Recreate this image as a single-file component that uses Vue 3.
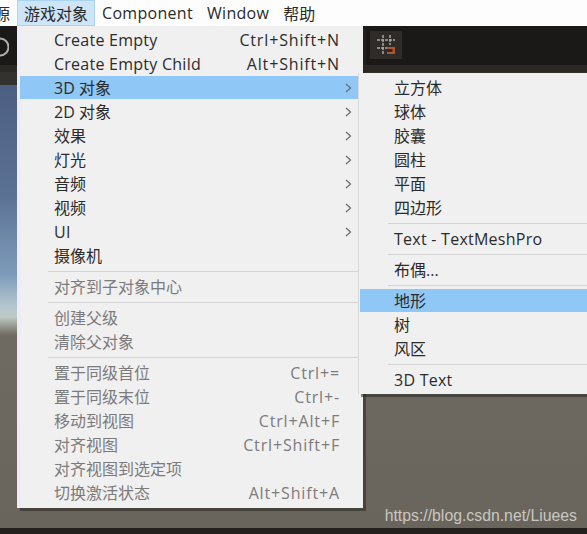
<template>
  <div class="page">
    <div class="menubar">
      <span class="top clipped">源</span>
      <span class="top active">游戏对象</span>
      <span class="top latin">Component</span>
      <span class="top latin">Window</span>
      <span class="top">帮助</span>
    </div>
    <div class="toolbar">
      <svg class="rotate-icon" width="9" height="20" viewBox="0 0 9 20">
        <path d="M0 1.500A8.500 8.500 0 0 1 0 18.500" fill="none" stroke="#aeaeae" stroke-width="2" />
      </svg>
      <div class="snap-button">
        <svg width="22" height="24" viewBox="0 0 22 24">
          <path d="M8 2v19M15 2v10M2 7h18M2 15h10" stroke="#aaa8a5" stroke-width="1.500" stroke-dasharray="3 1" fill="none" />
          <path d="M12 14h8v7h-8v-2h5.500v-3h-5.500z" fill="#b2542c" />
        </svg>
      </div>
    </div>
    <div class="subbar"></div>
    <div class="scene">
      <span class="watermark">https://blog.csdn.net/Liuees</span>
    </div>
    <div class="statusbar"></div>

    <div class="menu main-menu">
      <template v-for="item in mainItems" :key="item.label || item.id">
        <div v-if="item.sep" class="sep"></div>
        <div v-else class="row" :class="{ selected: item.selected, disabled: item.disabled }">
          <span class="label" :class="{ cjk: hasCjk(item.label) }">{{ item.label }}</span>
          <span v-if="item.shortcut" class="shortcut">{{ item.shortcut }}</span>
          <svg v-if="item.arrow" class="arrow" width="7" height="10" viewBox="0 0 7 10">
            <path d="M1 1l4.500 4-4.500 4" fill="none" stroke="#6b6b6b" stroke-width="1.200" />
          </svg>
        </div>
      </template>
    </div>

    <div class="menu sub-menu">
      <template v-for="item in subItems" :key="item.label || item.id">
        <div v-if="item.sep" class="sep"></div>
        <div v-else class="row" :class="{ selected: item.selected }">
          <span class="label" :class="{ cjk: hasCjk(item.label) }">{{ item.label }}</span>
        </div>
      </template>
    </div>
  </div>
</template>

<script setup>
const mainItems = [
  { label: 'Create Empty', shortcut: 'Ctrl+Shift+N' },
  { label: 'Create Empty Child', shortcut: 'Alt+Shift+N' },
  { label: '3D 对象', arrow: true, selected: true },
  { label: '2D 对象', arrow: true },
  { label: '效果', arrow: true },
  { label: '灯光', arrow: true },
  { label: '音频', arrow: true },
  { label: '视频', arrow: true },
  { label: 'UI', arrow: true },
  { label: '摄像机' },
  { sep: true, id: 's1' },
  { label: '对齐到子对象中心', disabled: true },
  { sep: true, id: 's2' },
  { label: '创建父级', disabled: true },
  { label: '清除父对象', disabled: true },
  { sep: true, id: 's3' },
  { label: '置于同级首位', shortcut: 'Ctrl+=', disabled: true },
  { label: '置于同级末位', shortcut: 'Ctrl+-', disabled: true },
  { label: '移动到视图', shortcut: 'Ctrl+Alt+F', disabled: true },
  { label: '对齐视图', shortcut: 'Ctrl+Shift+F', disabled: true },
  { label: '对齐视图到选定项', disabled: true },
  { label: '切换激活状态', shortcut: 'Alt+Shift+A', disabled: true }
]

const subItems = [
  { label: '立方体' },
  { label: '球体' },
  { label: '胶囊' },
  { label: '圆柱' },
  { label: '平面' },
  { label: '四边形' },
  { sep: true, id: 's1' },
  { label: 'Text - TextMeshPro' },
  { sep: true, id: 's2' },
  { label: '布偶...' },
  { sep: true, id: 's3' },
  { label: '地形', selected: true },
  { label: '树' },
  { label: '风区' },
  { sep: true, id: 's4' },
  { label: '3D Text' }
]

// labels with chinese in them sit a pixel higher
function hasCjk(label) {
  return /[\u4e00-\u9fff]/.test(label)
}
</script>

<style scoped>
.page {
  position: relative;
  width: 587px;
  height: 534px;
  overflow: hidden;
  display: flex;
  flex-direction: column;
  background: #6a655c;
  font-family: "Open Sans", "Noto Sans CJK SC", sans-serif;
  font-size: 16px;
  color: #2b2b2b;
}

.menubar {
  height: 26px;
  flex: none;
  display: flex;
  align-items: stretch;
  background: #fdfdfd;
}

.top {
  display: flex;
  align-items: center;
  padding: 0 7px;
}

.latin {
  letter-spacing: 0.3px;
}

.clipped {
  margin-left: -13px;
}

.active {
  background: #cde5f7;
  box-shadow: inset 0 0 0 1px #a9d3f2;
}

.toolbar {
  height: 46px;
  flex: none;
  position: relative;
  background: linear-gradient(#1b1917 0 39px, #2b2826 39px);
}

.rotate-icon {
  position: absolute;
  left: 0;
  top: 11px;
}

.snap-button {
  position: absolute;
  left: 370px;
  top: 5px;
  width: 32px;
  height: 28px;
  display: flex;
  align-items: center;
  justify-content: center;
  background: #2e2b29;
}

.subbar {
  height: 13px;
  flex: none;
  background: #34322f;
}

.scene {
  flex: 1;
  display: flex;
  align-items: flex-end;
  justify-content: flex-end;
  padding: 0 10px 3px 0;
  background: linear-gradient(#4c5f83 0, #5b7194 110px, #7e9cba 190px, #b4c7cf 222px, #bfc9c4 232px, #6e6a61 250px, #6a655c 100%);
}

.watermark {
  font-family: "Liberation Sans", Arial, sans-serif;
  font-size: 15.800px;
  color: #c9c7c1;
}

.statusbar {
  height: 6px;
  flex: none;
  background: #23201d;
}

.menu {
  position: absolute;
  box-sizing: border-box;
  background: #f1f0f1;
}

.main-menu {
  left: 17px;
  top: 26px;
  width: 346px;
  height: 482px;
  padding: 2px 3px 3px;
  box-shadow: 3px 3px 0 rgba(40, 38, 35, 0.55), inset 4px 0 0 #ecebf6;
}

.sub-menu {
  left: 358px;
  top: 73px;
  width: 240px;
  height: 321px;
  padding: 3px 3px 2px 1px;
  border-left: 1px solid #d8d8d8;
  box-shadow: 3px 3px 0 rgba(40, 38, 35, 0.55);
}

.row {
  height: 24px;
  display: flex;
  align-items: center;
  position: relative;
  white-space: nowrap;
}

.main-menu .row {
  padding: 0 40px 0 34px;
}

.sub-menu .row {
  padding-left: 34px;
}

.row.selected {
  background: linear-gradient(#8fc7f6, #8fc7f6) no-repeat 0 0 / 100% 23px;
}

.label {
  flex: 1;
  letter-spacing: 0.25px;
}

.label.cjk {
  margin-top: -2px;
  letter-spacing: 0;
}

.shortcut {
  position: absolute;
  right: 20px;
  letter-spacing: 0.85px;
}

.arrow {
  position: absolute;
  left: 325px;
  top: 7px;
}

.disabled {
  color: #7b7b7b;
}

.sep {
  height: 1px;
  margin: 3px 0 3px 28px;
  background: #d4d4d4;
}
</style>

<style>
html, body {
  margin: 0;
  background: #6a655c;
}
</style>
